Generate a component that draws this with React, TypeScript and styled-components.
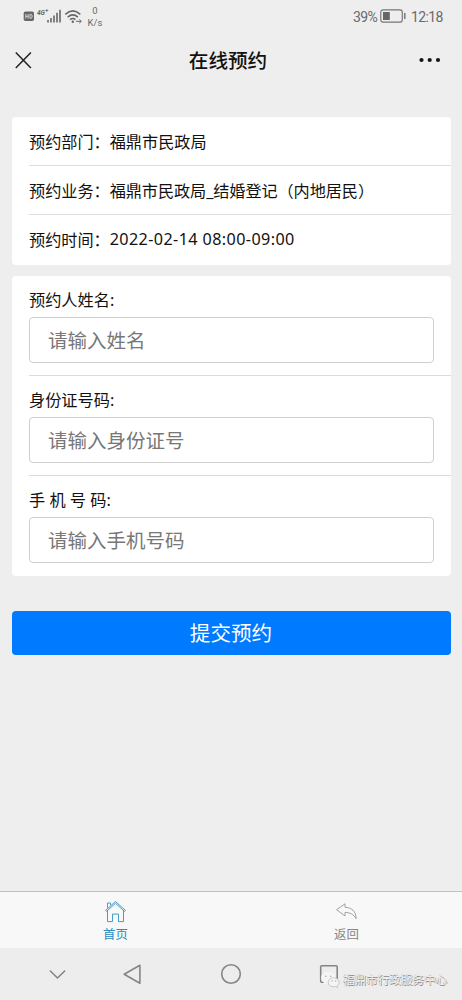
import React from 'react';
import styled, { createGlobalStyle } from 'styled-components';

const GlobalStyle = createGlobalStyle`
  * { box-sizing: border-box; }
  body {
    margin: 0;
    background: #eeeeee;
    color: #111;
    font-family: "Noto Sans", "Noto Sans CJK SC", sans-serif;
  }
`;

const Page = styled.div`
  width: 462px;
  height: 1000px;
  display: flex;
  flex-direction: column;
  overflow: hidden;
`;

const StatusBar = styled.header`
  height: 32px;
  padding: 0 24px 0 23px;
  display: flex;
  justify-content: space-between;
  align-items: center;
  color: #6a6a6a;
`;

const StatusGroup = styled.div`
  display: flex;
  align-items: center;
  font-family: Roboto, sans-serif;
`;

const NetSpeed = styled.div`
  width: 18px;
  margin-left: 3px;
  padding-top: 1px;
  text-align: center;
  font-size: 9.5px;
  line-height: 11.5px;
  white-space: nowrap;
`;

const StatusText = styled.span<{ $width: number }>`
  width: ${(p) => p.$width}px;
  font-size: 14px;
  letter-spacing: -0.6px;
  line-height: 18px;
  padding-top: 1px;
  white-space: nowrap;
`;

const BatteryIcon = styled.svg`
  margin: 0 5px 0 3px;
`;

const TitleBar = styled.div`
  height: 57px;
  padding: 0 21px 0 15px;
  display: grid;
  grid-template-columns: 1fr auto 1fr;
  align-items: center;

  > :last-child { justify-self: end; }
`;

const Title = styled.h1`
  margin: 0 0 0 -6px;
  font-size: 19.6px;
  line-height: 28px;
  font-weight: 500;
  transform: translateX(3px);
`;

const Content = styled.main`
  flex: 1;
  padding: 28px 11px 0 12px;
`;

const Card = styled.section`
  background: #fff;
  border-radius: 4px;
  padding-left: 17px;
  margin-bottom: 11px;
`;

const InfoRow = styled.div`
  height: 49px;
  display: flex;
  align-items: center;
  padding-bottom: 1px;
  font-size: 16.15px;
  white-space: nowrap;
  &:first-child { height: 48px; padding-bottom: 0; }
  & + & { border-top: 1px solid #dedede; }
  &:last-child { height: 51px; padding-bottom: 2px; }
`;

const InfoValue = styled.span<{ $spacing?: number }>`
  letter-spacing: ${(p) => p.$spacing ?? 0}px;
`;

const Field = styled.div`
  height: 100px;
  padding: 12px 17px 0 0;
  &:first-child { height: 99px; }
  & + & { border-top: 1px solid #dcdcdc; }
  &:last-child { height: 101px; }
`;

const FieldLabel = styled.label`
  display: block;
  height: 29px;
  font-size: 16.2px;
  line-height: 24px;
`;

const TextInput = styled.input`
  display: block;
  width: 405px;
  height: 46px;
  padding: 0 18px 2px;
  border: 1px solid #cfcfcf;
  border-radius: 4px;
  background: #fff;
  font: 19.5px "Noto Sans CJK SC", sans-serif;
  outline: none;
  &::placeholder { color: #777; opacity: 1; }
`;

const SubmitButton = styled.button`
  display: block;
  width: 439px;
  height: 44px;
  margin-top: 35px;
  padding: 0 1px 2px 0;
  border: 0;
  border-radius: 4px;
  background: #007aff;
  color: #fff;
  font: 20.6px "Noto Sans CJK SC", sans-serif;
`;

const TabBar = styled.nav`
  height: 57px;
  display: flex;
  background: #f8f8f8;
  border-top: 1px solid #bfc2c2;
`;

const Tab = styled.a<{ $active?: boolean }>`
  flex: 1;
  display: flex;
  flex-direction: column;
  align-items: center;
  padding-top: 8px;
  font-size: 12.4px;
  line-height: 18px;
  color: ${(p) => (p.$active ? '#2b8bbb' : '#858585')};
  svg { margin-bottom: 3px; }
`;

const SystemBar = styled.footer`
  position: relative;
  height: 52px;
  display: flex;
  align-items: center;
  padding-left: 48px;
  background: #ededed;
`;

const Watermark = styled.div`
  position: absolute;
  left: 320px;
  top: 22px;
  display: flex;
  align-items: center;
  gap: 3px;
  font-size: 11.6px;
  line-height: 20px;
  color: #f4f4f4;
  white-space: nowrap;
  text-shadow: 0.6px 0.6px 0.4px #858585, -0.5px -0.4px 0.4px #b0b0b0;
`;

const SignalIcons = () => (
  <svg width="60" height="20" viewBox="0 0 60 20" fill="none">
    <rect x=".7" y="5.5" width="10.3" height="9.6" rx="1.8" fill="#666" />
    <path d="M2.8 8v4.6M5.2 8v4.6M2.8 10.3h2.4M7 8.3v4h.7q1.5 0 1.5-2t-1.5-2z" stroke="#ededed" strokeWidth=".8" />
    <text x="14" y="9.3" fontSize="6.5" fontWeight="700" fontFamily="Roboto" fontStyle="italic" fill="#666">4G</text>
    <path d="M22.3 4.5h3M23.8 3v3" stroke="#666" strokeWidth=".7" />
    <path d="M25 14v2.5M28 12v4.5M31 9.6v6.9M34 6.8v9.7M37 3.8v12.7" stroke="#666" strokeWidth="1.6" />
    <path d="M42.3 8.3q7.5-6.8 15 0M44.7 11.1q5.1-4.5 10.2 0M47.1 13.6q2.7-2.2 5.4 0" stroke="#666" strokeWidth="1.6" />
    <circle cx="49.8" cy="15.7" r="1.2" fill="#666" />
    <path d="M53 15.3h5M56.3 13.5l2 1.8-2 1.8" stroke="#666" strokeWidth="1" />
  </svg>
);

const CloseIcon = () => (
  <svg width="18" height="18" viewBox="0 0 18 18" stroke="#222" strokeWidth="1.5" fill="none">
    <path d="M.8.5 15.9 16M15.9.5.8 16" />
  </svg>
);

const MoreIcon = () => (
  <svg width="22" height="7" viewBox="0 0 22 7" fill="#161616">
    <circle cx="2.5" cy="3" r="2.1" /><circle cx="10.7" cy="3" r="2.1" /><circle cx="19" cy="3" r="2.1" />
  </svg>
);

const HomeIcon = () => (
  <svg width="22" height="23" viewBox="0 0 22 23" fill="none" stroke="#3292c2" strokeWidth=".9">
    <path d="M.5 10.4 10.5 1.5l10 8.9-1 1L10.5 3.3 1.5 11.4zM2.5 7.8V3h3v2.1M2.5 10.7v10.9h5v-7.5h6v7.5h5V10.7" />
  </svg>
);

const ReturnIcon = () => (
  <svg width="22" height="23" viewBox="0 0 22 23" fill="none" stroke="#999" strokeWidth=".9" strokeLinejoin="round">
    <path d="M.6 9.7 9 3.8v3.5c6.7.2 11 4 11.2 11.4-2.7-4.4-6-6.2-11.2-6.3V16z" />
  </svg>
);

const SystemIcons = () => (
  <svg width="300" height="30" viewBox="0 0 300 30" fill="none" stroke="#858585" strokeWidth="1.6" strokeLinejoin="round" strokeLinecap="round">
    <path d="m2.3 12 7.2 7 7.2-7M76.2 15.3l15.7-9v18z" />
    <circle cx="183" cy="15" r="9.3" />
    <rect x="272.7" y="6.7" width="16.5" height="16.5" rx="1" />
  </svg>
);

const ChatIcon = () => (
  <svg width="20" height="19" viewBox="0 0 20 19">
    <path d="M8.2 1C4 1 1 3.5 1 6.7c0 2 1 3.6 2.8 4.6l-.6 2.3 2.6-1.3c1 .2 2 .3 3.2.1 4-.5 6.6-2.8 6.6-5.7C15.6 3.5 12.4 1 8.2 1Z" fill="#f5f5f5" />
    <path d="M13.7 6.8c-3.2 0-5.5 2-5.5 4.5s2.3 4.5 5.5 4.5c.7 0 1.3-.1 1.9-.3l2 1-.5-1.8c1.3-.8 2.1-2 2.1-3.4 0-2.5-2.3-4.5-5.5-4.5Z" fill="#f5f5f5" stroke="#b5b5b5" strokeWidth=".7" />
    <g fill="#aaa"><circle cx="5.7" cy="5.2" r=".8" /><circle cx="10.7" cy="5.2" r=".8" /><circle cx="12" cy="10" r=".7" /><circle cx="15.7" cy="10" r=".7" /></g>
  </svg>
);

const details = [
  { label: '预约部门：', value: '福鼎市民政局' },
  { label: '预约业务：', value: '福鼎市民政局_结婚登记（内地居民）', spacing: -0.07 },
  { label: '预约时间：', value: '2022-02-14 08:00-09:00', spacing: 0.4 },
];

const fields = [
  { id: 'name', label: '预约人姓名:', hint: '请输入姓名' },
  { id: 'identity', label: '身份证号码:', hint: '请输入身份证号' },
  { id: 'phone', label: '手 机 号 码:', hint: '请输入手机号码' },
];

export default function App() {
  return (
    <Page>
      <GlobalStyle />
      <StatusBar>
        <StatusGroup>
          <SignalIcons />
          <NetSpeed>0<br />K/s</NetSpeed>
        </StatusGroup>
        <StatusGroup>
          <StatusText $width={24}>39%</StatusText>
          <BatteryIcon width="26" height="14" viewBox="0 0 26 14" fill="none">
            <rect x=".8" y=".8" width="21.5" height="12.4" rx="2.5" stroke="#777" strokeWidth="1.2" />
            <rect x="3" y="3" width="6.8" height="8" fill="#666" />
            <path d="M24.8 4v6" stroke="#777" strokeWidth="1.5" />
          </BatteryIcon>
          <StatusText $width={27}>12:18</StatusText>
        </StatusGroup>
      </StatusBar>
      <TitleBar>
        <CloseIcon />
        <Title>在线预约</Title>
        <MoreIcon />
      </TitleBar>
      <Content>
        <Card>
          {details.map((d) => (
            <InfoRow key={d.label}>
              <span>{d.label}</span>
              <InfoValue $spacing={d.spacing}>{d.value}</InfoValue>
            </InfoRow>
          ))}
        </Card>
        <Card>
          {fields.map((f) => (
            <Field key={f.id}>
              <FieldLabel htmlFor={f.id}>{f.label}</FieldLabel>
              <TextInput id={f.id} placeholder={f.hint} />
            </Field>
          ))}
        </Card>
        <SubmitButton>提交预约</SubmitButton>
      </Content>
      <TabBar>
        <Tab $active><HomeIcon />首页</Tab>
        <Tab><ReturnIcon />返回</Tab>
      </TabBar>
      <SystemBar>
        <SystemIcons />
        <Watermark><ChatIcon />福鼎市行政服务中心</Watermark>
      </SystemBar>
    </Page>
  );
}
